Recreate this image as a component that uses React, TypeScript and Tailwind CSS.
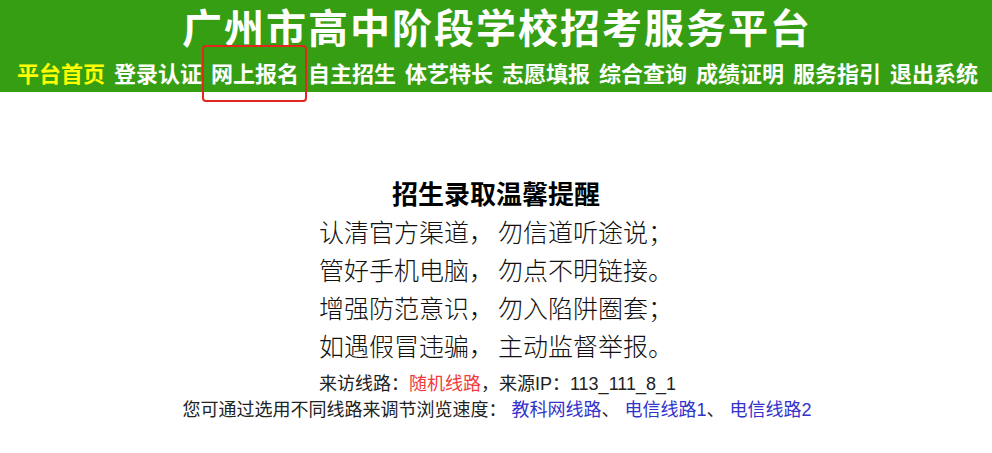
import React from "react";

const navItems = [
  "平台首页",
  "登录认证",
  "网上报名",
  "自主招生",
  "体艺特长",
  "志愿填报",
  "综合查询",
  "成绩证明",
  "服务指引",
  "退出系统",
];

const poem: [string, string][] = [
  ["认清官方渠道，", "勿信道听途说；"],
  ["管好手机电脑，", "勿点不明链接。"],
  ["增强防范意识，", "勿入陷阱圈套；"],
  ["如遇假冒违骗，", "主动监督举报。"],
];

export default function App() {
  return (
    <div
      className="relative w-[992px] h-[453px] bg-white overflow-hidden"
      style={{ fontFamily: '"Noto Sans CJK SC", "Noto Sans", sans-serif' }}
    >
      <header className="h-[92px] bg-[#359e13] flex flex-col items-center">
        <h1 className="mt-[4px] pl-[2px] text-[40px] leading-[44px] tracking-[2px] font-bold text-white whitespace-nowrap">
          广州市高中阶段学校招考服务平台
        </h1>
        <nav className="mt-[11px] ml-[3px] flex gap-[9px] text-[22px] leading-[26px] font-bold whitespace-nowrap">
          {navItems.map((item, i) => (
            <a
              key={item}
              className={i === 0 ? "text-[#ffff00]" : "text-white"}
            >
              {item}
            </a>
          ))}
        </nav>
      </header>

      <main className="pt-[82px] flex flex-col items-center text-black">
        <h2 className="text-[26px] leading-[38px] font-bold">招生录取温馨提醒</h2>
        <div className="flex flex-col items-center text-[25px] leading-[38px] font-light text-[#111]">
          {poem.map(([a, b]) => (
            <p key={a} className="whitespace-nowrap">
              {a}
              <span className="inline-block w-[4px]" />
              {b}
            </p>
          ))}
        </div>
        <div
          className="mt-[7px] flex flex-col items-center text-[18px] leading-[26px] text-[#222]"
          style={{ fontFamily: '"Liberation Sans", "Noto Sans CJK SC", sans-serif' }}
        >
          <p className="whitespace-nowrap ml-[3px]">
            来访线路：<span className="text-[#f03c3c]">随机线路</span>，来源IP：113_111_8_1
          </p>
          <p className="whitespace-nowrap ml-[2px]">
            您可通过选用不同线路来调节浏览速度：{" "}
            <a className="text-[#3232cc]">教科网线路</a>、{" "}
            <a className="text-[#3232cc]">电信线路1</a>、{" "}
            <a className="text-[#3232cc]">电信线路2</a>
          </p>
        </div>
      </main>

      <div className="absolute left-[202px] top-[45px] w-[105px] h-[57px] border-2 border-[#e3261f] rounded-[4px] pointer-events-none" />
    </div>
  );
}
